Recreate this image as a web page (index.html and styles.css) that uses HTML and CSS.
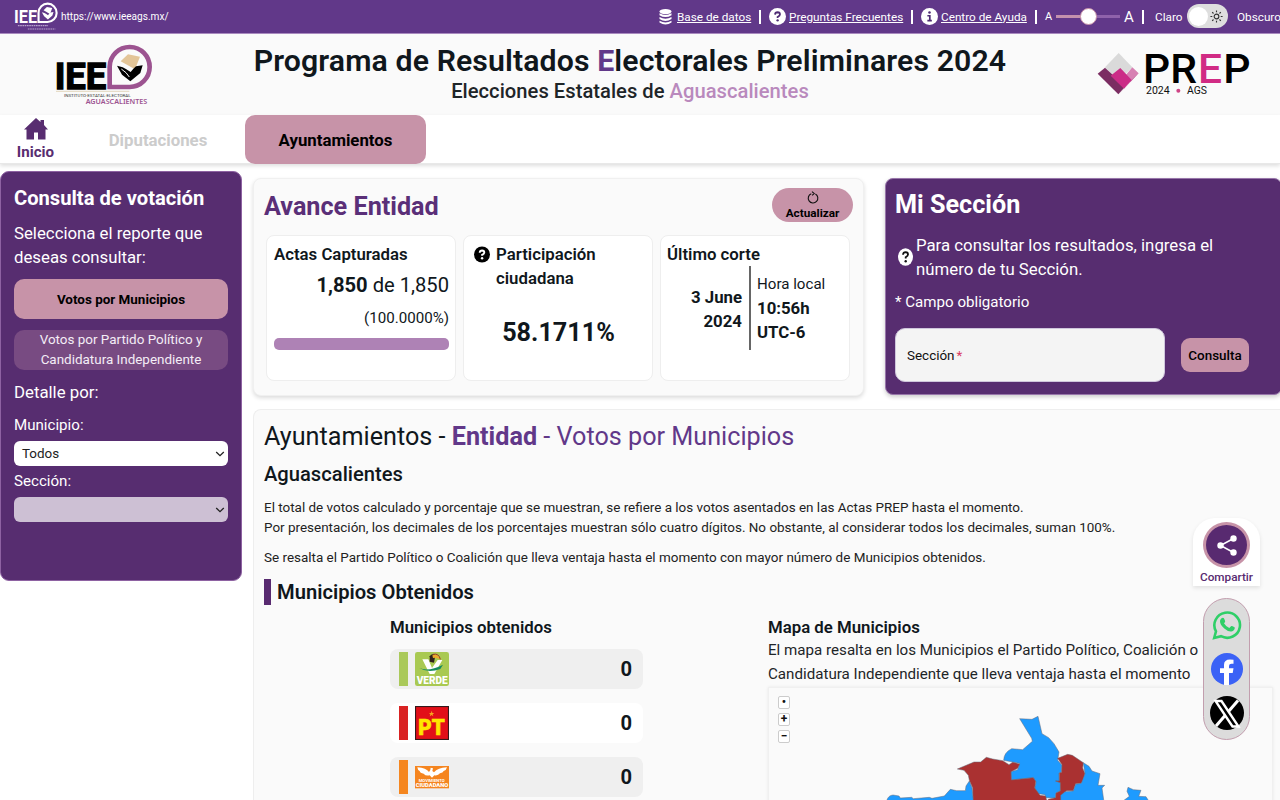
FILE: index.html
```html
<!DOCTYPE html>
<html lang="es">
<head>
<meta charset="utf-8">
<title>PREP 2024 Aguascalientes</title>
<link rel="stylesheet" href="styles.css">
</head>
<body>
<svg width="0" height="0" class="defs">
  <defs>
    <g id="drop">
      <path d="M329 261V200A60 60 0 1 1 389 261Z" fill="none" stroke-width="14"/>
    </g>
    <g id="hand">
      <path d="M351 197L368 202Q380 208 392 216Q398 208 408 199L428 196L421 219L391 244L366 224Z"/>
    </g>
  </defs>
</svg>

<div class="topbar">
  <a class="site">
    <svg class="site-logo" viewBox="166 130 292 190" preserveAspectRatio="none">
      <text x="166" y="268" font-size="118" font-weight="700" textLength="153" lengthAdjust="spacingAndGlyphs" fill="#fff">IEE</text>
      <use href="#drop" stroke="#fff"/>
      <use href="#hand" fill="#fff"/>
      <path d="M362 184L384 163L420 170L405 208Z" fill="#fff"/>
      <path d="M192 285H392M258 307H440" stroke="#b9a3cd" stroke-width="7" stroke-dasharray="11 4"/>
    </svg>
    <span>https://www.ieeags.mx/</span>
  </a>
  <div class="tools">
    <svg class="db" viewBox="0 0 13 16"><g fill="#fff"><ellipse cx="6.5" cy="2.6" rx="6" ry="2.6"/><path d="M.5 4.2Q6.500 7.800 12.500 4.200V6.200Q6.500 10 .5 6.200ZM.5 8Q6.500 11.600 12.500 8V10Q6.500 13.800 .5 10ZM.5 11.700Q6.500 15.300 12.500 11.700V13.500Q6.500 17.500 .5 13.500Z"/></g></svg>
    <a class="link l1">Base de datos</a>
    <i class="sep"></i>
    <svg class="ico" viewBox="0 0 16 16"><circle cx="8" cy="8" r="8" fill="#fff"/><path d="M5.700 6.200Q5.800 4 8.100 4Q10.300 4.100 10.300 6Q10.300 7.200 8.100 8.400V9.300" fill="none" stroke="#4d2a73" stroke-width="1.700"/><circle cx="8.100" cy="11.600" r="1.100" fill="#4d2a73"/></svg>
    <a class="link l2">Preguntas Frecuentes</a>
    <i class="sep"></i>
    <svg class="ico" viewBox="0 0 16 16"><circle cx="8" cy="8" r="8" fill="#fff"/><path d="M6 7.300H8.300V11.800M6 11.800H10.200" fill="none" stroke="#4d2a73" stroke-width="1.600"/><circle cx="8" cy="4.300" r="1.200" fill="#4d2a73"/></svg>
    <a class="link l3">Centro de Ayuda</a>
    <i class="sep"></i>
    <span class="a-small">A</span>
    <div class="slider"><i class="thumb"></i></div>
    <span class="a-big">A</span>
    <i class="sep"></i>
    <span class="claro">Claro</span>
    <div class="toggle"><i></i>
      <svg viewBox="0 0 16 16"><g fill="none" stroke="#333" stroke-width="1.200"><circle cx="8" cy="8" r="2.500"/><path d="M8 1.500V3.500M8 12.500V14.500M1.500 8H3.500M12.500 8H14.500M3.400 3.400L4.800 4.800M11.200 11.200L12.600 12.600M12.600 3.400L11.200 4.800M4.800 11.200L3.400 12.600"/></g></svg>
    </div>
    <span class="obscuro">Obscuro</span>
  </div>
</div>

<header class="header">
  <svg class="iee" viewBox="165 129 300 189">
    <text x="164" y="267" font-size="112" font-weight="700" textLength="155" lengthAdjust="spacingAndGlyphs" fill="#000" stroke="#000" stroke-width="4">IEE</text>
    <use href="#drop" stroke="#9c5390"/>
    <path d="M362 184L384 163L420 170L405 208Z" fill="#e3c598"/>
    <use href="#hand" fill="#000"/>
    <path d="M364 207L378 218L388 231" fill="none" stroke="#fafafa" stroke-width="3"/>
    <path d="M168 274H388" stroke="#d8c49e" stroke-width="2"/>
    <text x="192" y="291" font-size="13" textLength="200" lengthAdjust="spacingAndGlyphs" fill="#333">INSTITUTO·ESTATAL·ELECTORAL</text>
    <text x="257" y="312" font-size="20" textLength="185" lengthAdjust="spacingAndGlyphs" fill="#9c5390" font-weight="600" class="noto">AGUASCALIENTES</text>
  </svg>
  <div class="titles">
    <h1>Programa de Resultados <b>E</b>lectorales Preliminares 2024</h1>
    <p>Elecciones Estatales de <span>Aguascalientes</span></p>
  </div>
  <svg class="prep" viewBox="50 50 462 132">
    <path d="M115 53L156 96L115 136L74 96Z" fill="#dadada"/>
    <path d="M74 97L97 118L133 156L114 177L52 115Z" fill="#7b2d62"/>
    <path d="M156 96L175 114L150 140L137 118Z" fill="#d781b3"/>
    <path d="M175 114L115 177L135 155L160 128Z" fill="#b04b88"/>
    <path d="M120 98L154 134L131 160L91 121Z" fill="#cb2c87"/>
    <g font-size="124" font-weight="500">
      <text x="188" y="143" textLength="162" lengthAdjust="spacingAndGlyphs" fill="#000">PR</text>
      <text x="353" y="143" textLength="72" lengthAdjust="spacingAndGlyphs" fill="#d12b84">E</text>
      <text x="429" y="143" textLength="82" lengthAdjust="spacingAndGlyphs" fill="#000">P</text>
    </g>
    <text x="197" y="177" font-size="31" textLength="71" lengthAdjust="spacingAndGlyphs" fill="#111">2024</text>
    <circle cx="294" cy="166" r="6" fill="#cf4586"/>
    <text x="320" y="177" font-size="31" textLength="60" lengthAdjust="spacingAndGlyphs" fill="#111">AGS</text>
  </svg>
</header>

<nav class="nav">
  <a class="home">
    <svg viewBox="0 0 24 22"><path d="M12 0L16.500 4V2H20V7L24 11.500H21.500V21.500H14V14.500H10V21.500H2.500V11.500H0Z" fill="#582d70"/></svg>
    <span>Inicio</span>
  </a>
  <a class="tab off">Diputaciones</a>
  <a class="tab on">Ayuntamientos</a>
</nav>

<div class="page">
  <aside class="side">
    <h2>Consulta de votación</h2>
    <p class="lead">Selecciona el reporte que<br>deseas consultar:</p>
    <button class="btn main-btn">Votos por Municipios</button>
    <button class="btn alt-btn">Votos por Partido Político y<br>Candidatura Independiente</button>
    <p class="detail">Detalle por:</p>
    <label>Municipio:</label>
    <div class="select"><span>Todos</span><svg viewBox="0 0 10 6"><path d="M1.200 1L5 4.600L8.800 1" fill="none" stroke="#222" stroke-width="1.300"/></svg></div>
    <label>Sección:</label>
    <div class="select disabled"><span></span><svg viewBox="0 0 10 6"><path d="M1.200 1L5 4.600L8.800 1" fill="none" stroke="#222" stroke-width="1.300"/></svg></div>
  </aside>

  <main class="main">
    <div class="row">
      <section class="avance">
        <div class="av-head">
          <h2>Avance Entidad</h2>
          <button class="refresh">
            <svg viewBox="0 0 12 13"><path d="M4.300 2.700A4.800 4.800 0 1 0 8.400 3M5 .6L7.200 2.500L5.200 4.400" fill="none" stroke="#111" stroke-width="1.100"/></svg>
            <span>Actualizar</span>
          </button>
        </div>
        <div class="cards">
          <div class="card">
            <h3>Actas Capturadas</h3>
            <p class="count"><b>1,850</b> de 1,850</p>
            <p class="pct">(100.0000%)</p>
            <div class="bar"></div>
          </div>
          <div class="card part">
            <div class="q-row">
              <svg class="q" viewBox="0 0 16 16"><circle cx="8" cy="8" r="8" fill="#000"/><path d="M5.700 6.200Q5.800 4 8.100 4Q10.300 4.100 10.300 6Q10.300 7.200 8.100 8.400V9.300" fill="none" stroke="#fff" stroke-width="1.900"/><circle cx="8.100" cy="11.800" r="1.200" fill="#fff"/></svg>
              <h3>Participación<br>ciudadana</h3>
            </div>
            <p class="big">58.1711%</p>
          </div>
          <div class="card corte">
            <h3>Último corte</h3>
            <div class="when">
              <div class="date">3 June<br>2024</div>
              <div class="hour"><span>Hora local</span><b>10:56h</b><b>UTC-6</b></div>
            </div>
          </div>
        </div>
      </section>

      <section class="mi">
        <h2>Mi Sección</h2>
        <div class="mi-help">
          <svg viewBox="0 0 15 18"><ellipse cx="7.500" cy="9" rx="7.500" ry="8.700" fill="#fff"/><path d="M5 6.800Q5.200 4.200 7.600 4.200Q10 4.300 10 6.500Q10 7.700 7.700 9.300V10.600" fill="none" stroke="#111" stroke-width="1.800"/><circle cx="7.700" cy="13.200" r="1.200" fill="#111"/></svg>
          <p>Para consultar los resultados, ingresa el<br>número de tu Sección.</p>
        </div>
        <p class="req">* Campo obligatorio</p>
        <div class="form">
          <div class="input">Sección<em>*</em></div>
          <button>Consulta</button>
        </div>
      </section>
    </div>

    <section class="results">
      <h2 class="crumbs">Ayuntamientos - <span><b>Entidad</b> - Votos por Municipios</span></h2>
      <h3 class="state">Aguascalientes</h3>
      <p class="note">El total de votos calculado y porcentaje que se muestran, se refiere a los votos asentados en las Actas PREP hasta el momento.</p>
      <p class="note n2">Por presentación, los decimales de los porcentajes muestran sólo cuatro dígitos. No obstante, al considerar todos los decimales, suman 100%.</p>
      <p class="note n3">Se resalta el Partido Político o Coalición que lleva ventaja hasta el momento con mayor número de Municipios obtenidos.</p>
      <h3 class="obt">Municipios Obtenidos</h3>
      <div class="cols">
        <div class="parties">
          <h4>Municipios obtenidos</h4>
          <div class="party gray">
            <i class="verde"></i>
            <svg viewBox="106 126 102 102"><rect x="106" y="126" width="102" height="102" rx="7" fill="#a9c952"/><path d="M128 148H146L157 174L174 150H188L164 192H150Z" fill="#fff"/><path d="M119 174Q147 186 190 164L182 177Q145 190 119 174Z" fill="#168b5d"/><path d="M150 139Q157 128 167 136L163 158L150 155Z" fill="#30231b"/><path d="M158 136Q175 130 181 148Q171 141 160 144Z" fill="#efa82a"/><path d="M160 133Q178 129 182 148" fill="none" stroke="#a43623" stroke-width="3"/><text x="111" y="223" font-size="30" font-weight="900" textLength="93" lengthAdjust="spacingAndGlyphs" fill="#fff">VERDE</text></svg>
            <b>0</b>
          </div>
          <div class="party">
            <i class="pt"></i>
            <svg viewBox="106 288 102 102"><rect x="107.500" y="289.500" width="99" height="99" fill="#e20f18" stroke="#35191b" stroke-width="3.500"/><path d="M156 302L158 309L164 309L159 313L161 319L156 315L150 319L152 313L148 309L154 309Z" fill="#f7a51d"/><text x="116" y="376" font-size="67" font-weight="900" textLength="79" lengthAdjust="spacingAndGlyphs" fill="#ffe600" stroke="#ffe600" stroke-width="2">PT</text></svg>
            <b>0</b>
          </div>
          <div class="party gray">
            <i class="mc"></i>
            <svg viewBox="106 450 102 102"><rect x="106" y="468" width="102" height="67" fill="#f5851f"/><path d="M113 472Q140 474 148 486L152 480L153 473L160 475L158 483L163 487Q174 473 202 472Q200 481 192 483Q190 489 181 490Q175 498 164 496L157 503L150 496Q138 499 132 491Q121 489 120 483Q114 481 113 472Z" fill="#fff"/><text x="117" y="516" font-size="10" font-weight="700" textLength="78" lengthAdjust="spacingAndGlyphs" fill="#fff">MOVIMIENTO</text><text x="108" y="532" font-size="18" font-weight="900" textLength="98" lengthAdjust="spacingAndGlyphs" fill="#fff">CIUDADANO</text></svg>
            <b>0</b>
          </div>
        </div>
        <div class="mapcol">
          <h4>Mapa de Municipios</h4>
          <p>El mapa resalta en los Municipios el Partido Político, Coalición o<br>Candidatura Independiente que lleva ventaja hasta el momento</p>
          <div class="map">
            <div class="zoomer"><span>•</span><span>+</span><span>−</span></div>
            <svg class="shape" viewBox="27 230 1509 345">
              <g stroke="#676b78" stroke-width="1.500" stroke-linejoin="round">
                <path fill="#1e9bff" d="M380 572Q384 555 399 554L417 557L421 563L455 561L460 565L508 561L516 564L553 557L571 537L590 541L616 541L618 527L628 512L636 532L639 560L646 575Z"/>
                <path fill="#1e9bff" d="M779 325L816 327L834 318L846 370L866 382L882 400L897 425L893 450L906 465L904 486L897 488L898 512H887L902 517L901 542L888 548L886 563L857 562L855 553L835 550L824 533L828 515L820 502L754 509L753 484L773 478L779 459L731 450Q732 426 755 415L788 418L817 393L815 384Z"/>
                <path fill="#aa3131" d="M592 476L642 455H662L679 441L698 446L728 451L747 463L758 456L779 461L773 474L753 484L754 509L820 502L827 513L824 533L840 555L857 557L861 575H640L638 532L628 510L625 495L612 480Z"/>
                <path fill="#aa3131" d="M893 444L923 432L937 435L970 457L968 473L975 490L970 507L964 519L947 520L940 541H920L911 549L902 575H858L865 567L887 562L888 548L901 542V517L887 512H898V488L905 486L906 463Z"/>
                <path fill="#1e9bff" d="M970 457L987 468L996 482L1020 490L1014 525H1034L1026 533L1032 575H902L902 555L915 544L940 542L947 522L964 519L975 490Z"/>
                <path fill="#1e9bff" d="M1085 575L1108 558L1101 543L1104 531L1120 538L1143 540L1136 558L1158 559L1168 575Z"/>
              </g>
            </svg>
          </div>
        </div>
      </div>
    </section>
  </main>
</div>

<div class="share">
  <div class="share-box">
    <div class="share-btn"><svg viewBox="0 0 20 20"><path d="M16.500 3L3.500 10L16.500 17" fill="none" stroke="#fff" stroke-width="1.500"/><g fill="#fff"><circle cx="16.500" cy="3" r="3.200"/><circle cx="3.500" cy="10" r="3.200"/><circle cx="16.500" cy="17" r="3.200"/></g></svg></div>
    <span>Compartir</span>
  </div>
  <div class="socials">
    <svg viewBox="0 0 30 30"><path d="M2.200 28L4 21.300A12.800 12.600 0 1 1 9 26.200Z" fill="none" stroke="#2fcf68" stroke-width="2.600"/><path d="M9.500 8.200Q11.500 7 12.300 9L13.200 11.300Q13.200 12.300 12 13.300Q13.800 16.600 17.300 18L19 16.200Q19.700 15.700 22.800 17.500Q22.800 20.700 19.500 21.500Q16.300 22 12.300 18.500Q7.800 14.500 8 11Q8.200 9.300 9.500 8.200Z" fill="#2fcf68"/></svg>
    <svg class="fb" viewBox="0 0 32 32"><circle cx="16" cy="16" r="16" fill="#3b62f6"/><path d="M13 33V20H9V15.300H13V12Q13 6.500 19 6.500L22.500 6.800V10.700H20.500Q18 10.700 18 13V15.300H22.500L21.700 20H18V33Z" fill="#fff"/></svg>
    <svg class="x" viewBox="0 0 34 34"><circle cx="17" cy="17" r="17" fill="#000"/><path d="M28 4.500L6 30" stroke="#fff" stroke-width="3"/><path d="M5.500 5H11.500L28.500 30.500H22.500Z" fill="#000" stroke="#fff" stroke-width="2.400"/></svg>
  </div>
</div>
</body>
</html>
```

FILE: styles.css
```css
* { box-sizing: border-box; }
body { margin: 0; width: 1280px; height: 800px; overflow: hidden; background: #fff; color: #10171c; font-family: Roboto, sans-serif; position: relative; }
h1, h2, h3, h4, p { margin: 0; }
svg { display: block; flex: none; }
button { border: 0; padding: 0; font-family: inherit; color: #000; }
.defs { position: absolute; }
.noto { font-family: "Noto Sans", sans-serif; }

.topbar { height: 34px; background: #613889; border-bottom: 1px solid #a98abf; display: flex; justify-content: space-between; color: #fff; font-size: 11.76px; overflow: hidden; }
.site { display: flex; align-items: center; padding-left: 14px; font-size: 10.08px; line-height: 33px; }
.site span { margin-left: 3px; }
.site-logo { width: 44px; height: 29px; }
.tools { display: flex; align-items: center; width: 622px; height: 33px; white-space: nowrap; flex: none; }
.tools > * { flex: none; }
.db { width: 13px; height: 16px; margin-right: 5px; margin-left: 1px; margin-top: 1px; }
.ico { width: 17px; height: 17px; }
.link { text-decoration: underline; }
.l1 { width: 82px; }
.l2 { width: 122px; margin-left: 3px; }
.l3 { width: 94px; margin-left: 3px; }
.sep { width: 2px; height: 14px; background: #fff; margin-right: 8px; }
.a-small { width: 11px; font-size: 11px; }
.slider { width: 64px; height: 3px; background: linear-gradient(90deg, #c391ad 0 50%, #8f62ab 50%); position: relative; margin-right: 4px; }
.thumb { position: absolute; left: 24px; top: -7px; width: 17px; height: 17px; border-radius: 50%; background: #fff; border: 1px solid #c791a8; }
.a-big { font-size: 15px; width: 18px; }
.claro { width: 32px; margin-left: 3px; }
.toggle { width: 41px; height: 24px; border-radius: 12px; background: #dedede; display: flex; align-items: center; justify-content: space-between; padding: 0 4px 0 2px; margin-top: -1px; }
.toggle i { width: 19px; height: 19px; border-radius: 50%; background: #fff; }
.toggle svg { width: 15px; height: 15px; }
.obscuro { margin-left: 9px; }

.header { height: 81px; background: #fafafa; display: flex; }
.iee { width: 100px; height: 63px; margin: 9px 0 0 55px; }
.titles { width: 860px; margin-left: 45px; text-align: center; white-space: nowrap; padding-top: 9px; }
.titles h1 { font-size: 30.24px; line-height: 36px; font-weight: 600; letter-spacing: .11px; }
.titles h1 b { color: #613889; font-weight: 700; }
.titles p { font-size: 20.16px; line-height: 24px; color: #1e2528; font-weight: 500; letter-spacing: .03px; }
.titles p span { color: #b989bd; }
.prep { width: 154px; height: 44px; margin: 18px 0 0 37px; }

.nav { height: 49px; display: flex; border-bottom: 1px solid #e8e8e8; box-shadow: 0 2px 4px rgba(0,0,0,.13); }
.home { width: 71px; display: flex; flex-direction: column; align-items: center; color: #582d70; font-weight: 700; font-size: 15.12px; line-height: 18px; padding-top: 3px; }
.home svg { width: 24px; height: 22px; margin-bottom: 3px; }
.tab { height: 49px; line-height: 50px; text-align: center; font-size: 16.8px; font-weight: 700; }
.off { width: 174px; color: #ccc; }
.on { width: 181px; background: #c793a8; border-radius: 10px; color: #000; }

.page { display: flex; padding-top: 7px; }
.side { width: 242px; height: 410px; border: 1px solid #8e62a2; background: #572d70; border-radius: 9px; color: #fff; padding: 12px 13px; flex: none; }
.side h2 { font-size: 20.16px; line-height: 28px; white-space: nowrap; }
.side .lead { font-size: 16.8px; line-height: 24px; margin-top: 9px; white-space: nowrap; }
.btn { display: block; width: 214px; height: 40px; border-radius: 10px; font-size: 13.44px; line-height: 20px; white-space: nowrap; }
.main-btn { background: #c793a8; font-weight: 700; margin-top: 10px; padding-top: 1px; }
.alt-btn { background: #784b82; color: #f4edf6; margin-top: 11px; }
.detail { font-size: 16.8px; line-height: 22px; margin-top: 11px; }
.side label { display: block; font-size: 15.12px; line-height: 20px; margin-top: 12px; }
.select { height: 25px; border-radius: 6px; background: #fff; color: #222; font-size: 13.44px; display: flex; align-items: center; justify-content: space-between; padding: 0 3px 0 8px; margin-top: 6px; }
.select svg { width: 10px; height: 6px; }
.select + label { margin-top: 5px; }
.disabled { background: #cdc0d4; }

.main { margin-left: 11px; width: 1027px; flex: none; }
.row { display: flex; padding-top: 7px; }
.avance { width: 611px; height: 218px; background: #fafafa; border: 1px solid #f0f0f0; border-radius: 8px; box-shadow: 0 2px 4px rgba(0,0,0,.14); padding: 9px 10px; flex: none; }
.av-head { display: flex; justify-content: space-between; height: 47px; }
.av-head h2 { font-size: 25.2px; line-height: 37px; color: #5a2f78; }
.refresh { width: 81px; height: 34px; border-radius: 17px; background: #c793a8; font-size: 11.76px; font-weight: 700; line-height: 15px; display: flex; flex-direction: column; align-items: center; padding-top: 3px; }
.refresh svg { width: 12px; height: 13px; margin-bottom: 2px; }
.cards { display: flex; gap: 7px; margin-left: 2px; }
.card { width: 190px; height: 146px; background: #fff; border: 1px solid #eee; border-radius: 8px; padding: 6px 6px 6px 7px; }
.card h3 { font-size: 16.8px; line-height: 24px; font-weight: 600; }
.count { font-size: 20.16px; line-height: 30px; margin-top: 4px; text-align: right; }
.count b { font-weight: 700; }
.pct { font-size: 15.12px; line-height: 22px; text-align: right; margin-top: 7px; }
.bar { height: 12px; border-radius: 5px; background: #ae82b5; margin-top: 9px; }
.q-row { display: flex; }
.q { width: 16px; height: 17px; margin: 4px 6px 0 3px; }
.big { font-size: 25.2px; line-height: 30px; font-weight: 700; text-align: center; margin-top: 28px; }
.corte { padding-left: 6px; }
.when { display: flex; font-size: 16.8px; line-height: 24px; }
.date { width: 77px; text-align: right; font-weight: 700; padding: 19px 2px 0 0; flex: none; }
.hour { display: flex; flex-direction: column; border-left: 2px solid #666; margin-left: 5px; padding: 6px 0 0 6px; height: 84px; font-size: 15.12px; white-space: nowrap; }
.hour b { font-size: 16.8px; }

.mi { margin-left: 21px; width: 397px; height: 217px; background: #572d70; border: 1px solid #9876aa; border-radius: 8px; color: #fff; padding: 8px 10px 8px 9px; box-shadow: 0 2px 4px rgba(0,0,0,.2); flex: none; }
.mi h2 { font-size: 25.2px; line-height: 36px; }
.mi-help { display: flex; margin-top: 10px; }
.mi-help svg { width: 15px; height: 18px; margin: 15px 3px 0 3px; }
.mi-help p { font-size: 16.8px; line-height: 24px; white-space: nowrap; }
.req { font-size: 15.12px; line-height: 22px; margin-top: 10px; }
.form { display: flex; align-items: center; margin-top: 15px; }
.input { width: 270px; height: 54px; border-radius: 10px; background: #f4f4f4; border: 1px solid #cfc6dc; color: #111; font-size: 13.44px; line-height: 53px; padding-left: 11px; }
.input em { color: #d93a63; font-style: normal; margin-left: 2px; }
.form button { width: 68px; height: 34px; border-radius: 9px; background: #c793a8; margin-left: 16px; font-size: 13.44px; font-weight: 500; }

.results { margin-top: 13px; height: 420px; background: #fafafa; border: 1px solid #eee; border-right: 0; border-radius: 8px 0 0 0; padding: 9px 10px; white-space: nowrap; }
.crumbs { font-size: 25.2px; line-height: 36px; font-weight: 400; }
.crumbs span { color: #613889; }
.state { font-size: 20.16px; line-height: 26px; font-weight: 500; margin-top: 6px; }
.note { font-size: 13.46px; line-height: 20px; margin-top: 11px; color: #222; }
.n2 { margin-top: 0; }
.n3 { margin-top: 10px; }
.obt { font-size: 20.16px; line-height: 26px; font-weight: 600; border-left: 7px solid #582a70; padding-left: 6px; margin-top: 11px; }
.cols { display: flex; padding-top: 10px; }
.cols h4 { font-size: 16.8px; line-height: 25px; font-weight: 600; }
.parties { width: 253px; margin-left: 126px; flex: none; }
.party { height: 40px; border-radius: 8px; background: #fff; display: flex; align-items: center; padding: 0 11px 0 9px; margin-bottom: 14px; }
.parties h4 { margin-bottom: 9px; }
.gray { background: #efefef; }
.party i { width: 9px; height: 34px; margin-right: 7px; }
.party svg { width: 34px; height: 34px; }
.party b { margin-left: auto; font-size: 20.16px; }
.verde { background: #aac95a; }
.pt { background: #d92323; }
.mc { background: #f5861f; }
.mapcol { margin-left: 125px; width: 505px; flex: none; }
.mapcol p { font-size: 15.15px; line-height: 24px; color: #1e2528; margin-top: -2px; }
.map { width: 505px; height: 130px; border: 1px solid #f0f0f0; box-shadow: 0 0 3px rgba(0,0,0,.08); position: relative; display: flex; margin-top: 1px; }
.zoomer { position: absolute; left: 9px; top: 8px; display: flex; flex-direction: column; gap: 4px; }
.zoomer span { width: 12px; height: 13px; border: 1px solid #ccc; border-radius: 2px; background: #fff; font-size: 12px; line-height: 11px; text-align: center; font-weight: 700; color: #111; }
.shape { width: 503px; height: 115px; margin-top: -1px; }

.share { position: absolute; left: 1193px; top: 518px; width: 67px; display: flex; flex-direction: column; align-items: center; }
.share-box { width: 67px; height: 68px; background: #fff; border-radius: 22px 22px 0 0; box-shadow: 0 2px 4px rgba(0,0,0,.1); display: flex; flex-direction: column; align-items: center; padding-top: 4px; color: #582a70; font-size: 11.76px; line-height: 18px; font-weight: 500; }
.share-btn { width: 47px; height: 47px; border-radius: 50%; background: #582a70; border: 3px solid #c793a8; display: flex; align-items: center; justify-content: center; }
.share-btn svg { width: 20px; height: 21px; }
.socials { width: 47px; height: 142px; margin-top: 12px; border-radius: 24px; background: #dcdcdc; border: 1px solid #c29eae; display: flex; flex-direction: column; align-items: center; padding-top: 11px; }
.socials svg { width: 30px; height: 30px; }
.socials .fb { width: 32px; height: 32px; margin-top: 13px; }
.socials .x { width: 34px; height: 34px; margin-top: 11px; }
```
